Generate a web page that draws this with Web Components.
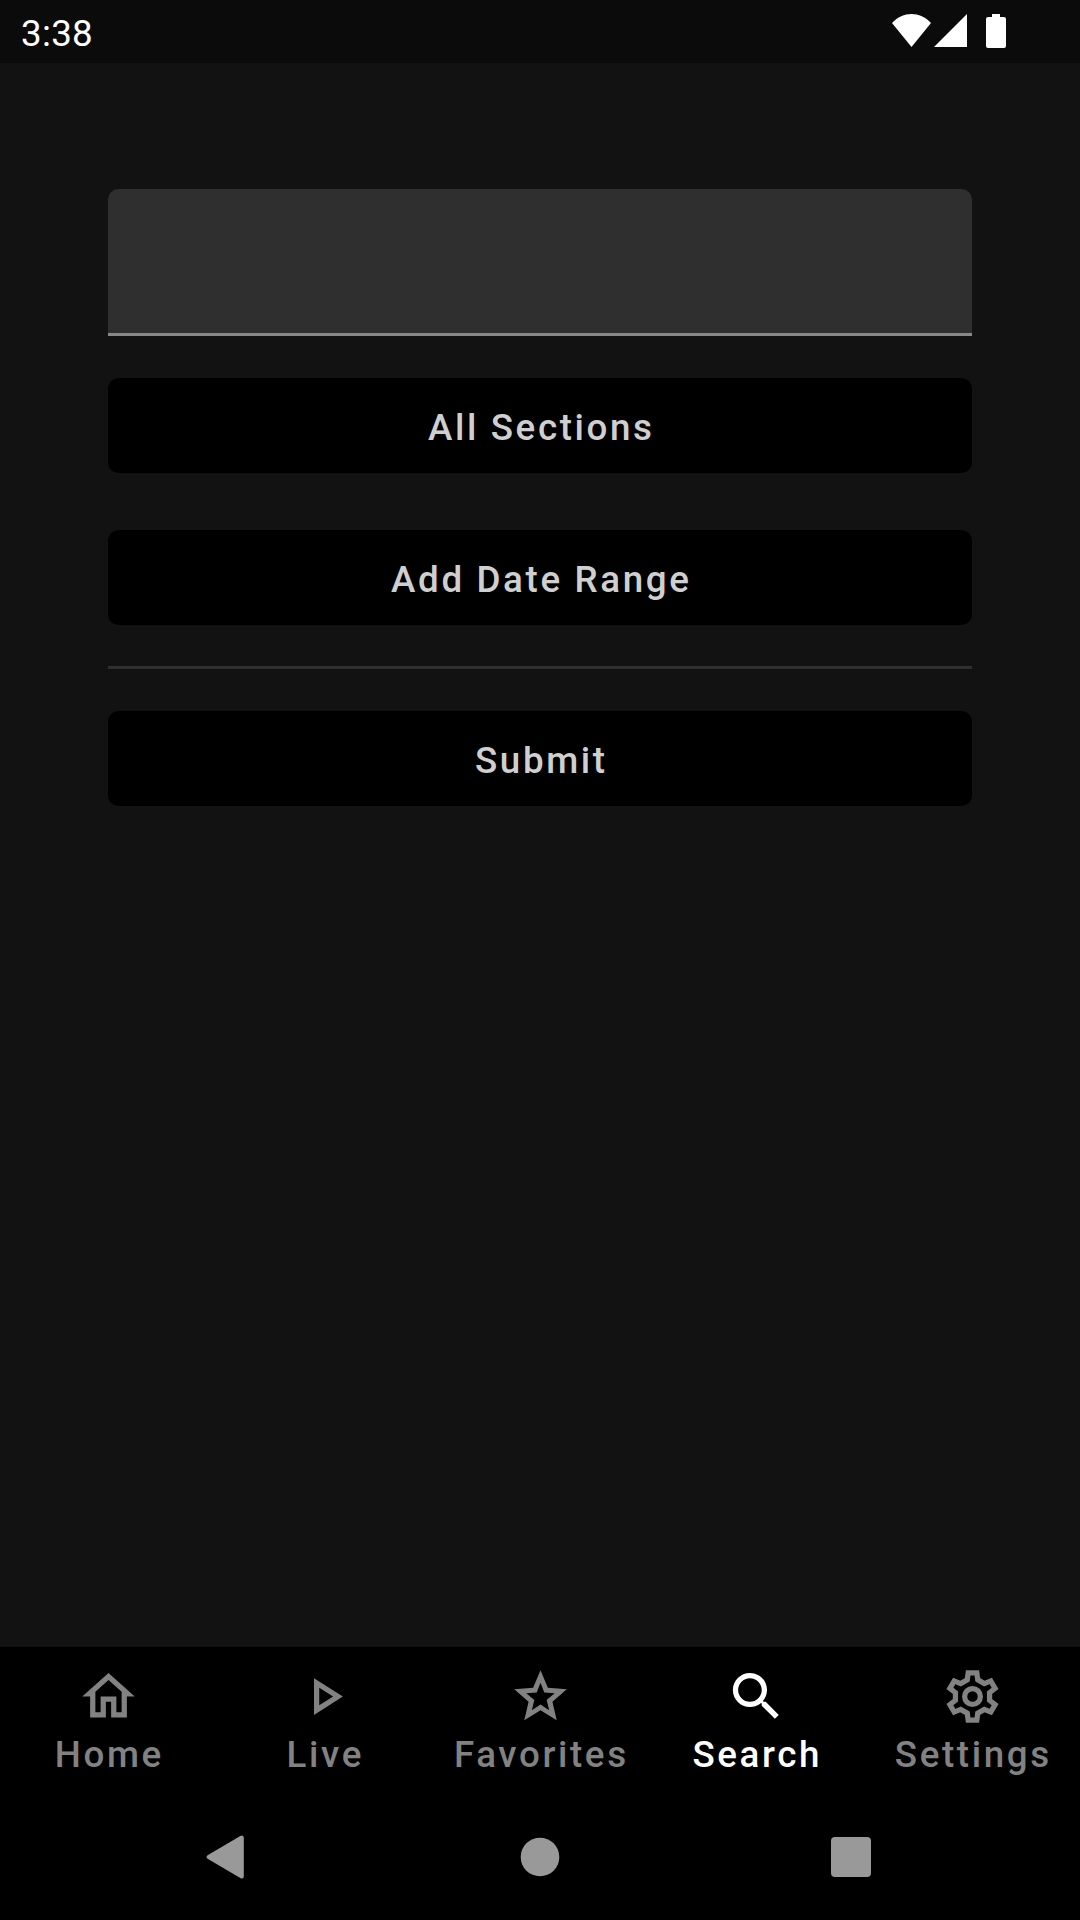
<!DOCTYPE html>
<html lang="en">
<head>
<meta charset="utf-8">
<title>Search</title>
<style>
  html, body {
    margin: 0;
    height: 100%;
  }
  body {
    background: #121212;
    font-family: Roboto, "Liberation Sans", sans-serif;
  }
</style>
</head>
<body>
<search-app></search-app>

<script>
const define = (name, markup) => {
  const template = document.createElement('template');
  template.innerHTML = markup;
  customElements.define(name, class extends HTMLElement {
    constructor() {
      super();
      this.attachShadow({mode: 'open'}).appendChild(template.content.cloneNode(true));
    }
  });
};

define('status-bar', `<style>
    :host {
      display: flex;
      align-items: center;
      justify-content: space-between;
      box-sizing: border-box;
      height: 63px;
      padding: 0 74px 0 21px;
      background: #0b0b0b;
      color: #fff;
    }
    .time {
      font-size: 36.75px;
      line-height: 43px;
      letter-spacing: 0.3px;
      padding-top: 3px;
    }
    svg { display: block; fill: currentColor; margin-bottom: 1px; }
  </style>
  <span class="time"><slot></slot></span>
  <svg width="114" height="34" viewBox="0 0 114 34">
    <path d="M0 9C11-3 28-3 39 9L19.5 33z"/>
    <path d="M75 0v33H42z"/>
    <path d="M100 0h8v3h4a2 2 0 0 1 2 2v27a2 2 0 0 1-2 2H96a2 2 0 0 1-2-2V5a2 2 0 0 1 2-2h4z"/>
  </svg>`);

define('text-field', `<style>
    :host {
      display: block;
      box-sizing: border-box;
      height: 147px;
      background: #2f2f2f;
      border-radius: 10.5px 10.5px 0 0;
      overflow: hidden;
    }
    input {
      display: block;
      box-sizing: border-box;
      width: 100%;
      height: 100%;
      margin: 0;
      padding: 0 42px;
      border: 0;
      border-bottom: 3px solid #888;
      outline: 0;
      background: none;
      color: #ccc;
      font: 42px Roboto, sans-serif;
    }
  </style>
  <input type="text">`);

define('app-button', `<style>
    :host { display: block; height: 95px; }
    button {
      display: block;
      box-sizing: border-box;
      width: 100%;
      height: 100%;
      margin: 0;
      padding: 4px 0 0 2.6px;
      border: 0;
      border-radius: 10.5px;
      background: #000;
      color: #cfcfcf;
      font: 500 36.75px/43px Roboto, sans-serif;
      letter-spacing: 2.625px;
    }
  </style>
  <button><slot></slot></button>`);

define('line-divider', `<style>
    :host { display: block; height: 3px; background: #2f2f2f; }
  </style>`);

define('tab-bar', `<style>
    :host {
      display: grid;
      grid-template-columns: repeat(5, 216px);
      height: 147px;
      background: #000;
    }
  </style>
  <slot></slot>`);

const ICONS = {
  home: '<path d="M12 5.69l5 4.5V18h-2v-6H9v6H7v-7.81l5-4.5M12 3L2 12h3v8h6v-6h2v6h6v-8h3L12 3z"/>',
  play: '<path d="M10 8.64L15.27 12 10 15.36V8.64M8 5v14l11-7L8 5z"/>',
  star: '<path fill-rule="evenodd" d="M22 9.24l-7.19-.62L12 2 9.19 8.63 2 9.24l5.46 4.73L5.82 21 12 17.27 18.18 21l-1.63-7.03L22 9.24zM12 6.75l1.45 3.7 3.95.3-3.05 2.6.95 3.85L12 15l-3.3 2.2.95-3.85-3.05-2.6 3.95-.3z"/>',
  search: '<path d="M15.5 14h-.79l-.28-.27C15.41 12.59 16 11.11 16 9.5 16 5.91 13.09 3 9.5 3S3 5.91 3 9.5 5.91 16 9.5 16c1.61 0 3.09-.59 4.23-1.57l.27.28v.79l5 4.99L20.49 19l-4.99-5zm-6 0C7.01 14 5 11.99 5 9.5S7.01 5 9.5 5 14 7.01 14 9.5 11.99 14 9.5 14z"/>',
  settings: `<g fill="none" stroke="currentColor" stroke-width="2">
    <path d="M10.35 3h3.3L14 5.65l2.5 1.44 2.47-1.02 1.65 2.86-2.12 1.63v2.88l2.12 1.63-1.65 2.86-2.47-1.02L14 18.35 13.65 21h-3.3L10 18.35l-2.5-1.44-2.47 1.02-1.65-2.86 2.12-1.63v-2.88L3.38 8.93l1.65-2.86L7.5 7.09 10 5.65z"/>
    <circle cx="12" cy="12" r="3"/>
  </g>`
};

class TabItem extends HTMLElement {
  connectedCallback() {
    this.attachShadow({mode: 'open'}).innerHTML = `<style>
      :host {
        display: flex;
        flex-direction: column;
        align-items: center;
        padding-top: 18px;
        color: #828282;
        font-size: 36.75px;
        font-weight: 500;
        line-height: 43px;
        letter-spacing: 2.625px;
        white-space: nowrap;
      }
      :host([selected]) { color: #fff; }
      svg { display: block; width: 63px; height: 63px; fill: currentColor; margin-bottom: 5px; }
      span { padding-left: 2.6px; }
    </style>
    <svg viewBox="0 0 24 24">${ICONS[this.getAttribute('icon')]}</svg>
    <span><slot></slot></span>`;
  }
}
customElements.define('tab-item', TabItem);

define('system-nav', `<style>
    :host {
      display: flex;
      justify-content: space-between;
      align-items: center;
      box-sizing: border-box;
      height: 126px;
      padding: 0 208px 0 206px;
      background: #000;
    }
    svg { display: block; fill: #999; }
  </style>
  <svg width="43" height="44" viewBox="0 0 43 44">
    <path d="M34.3 1.1Q37.8-.8 37.8 3v38q0 3.8-3.5 1.9L2 24q-3-2 0-4z"/>
  </svg>
  <svg width="40" height="40" viewBox="0 0 40 40"><circle cx="20" cy="20" r="19.3"/></svg>
  <svg width="41" height="40" viewBox="0 0 41 40"><rect width="40" height="40" rx="4"/></svg>`);

define('search-app', `<style>
    :host {
      display: flex;
      flex-direction: column;
      width: 1080px;
      height: 1920px;
      background: #121212;
    }
    main {
      flex: 1;
      padding: 126px 108px 0;
    }
    text-field { margin-bottom: 42px; }
    .sections { margin-bottom: 57px; }
    line-divider { margin: 41px 0 42px; }
  </style>
  <status-bar>3:38</status-bar>
  <main>
    <text-field></text-field>
    <app-button class="sections">All Sections</app-button>
    <app-button>Add Date Range</app-button>
    <line-divider></line-divider>
    <app-button>Submit</app-button>
  </main>
  <tab-bar>
    <tab-item icon="home">Home</tab-item>
    <tab-item icon="play">Live</tab-item>
    <tab-item icon="star">Favorites</tab-item>
    <tab-item icon="search" selected>Search</tab-item>
    <tab-item icon="settings">Settings</tab-item>
  </tab-bar>
  <system-nav></system-nav>`);
</script>
</body>
</html>
